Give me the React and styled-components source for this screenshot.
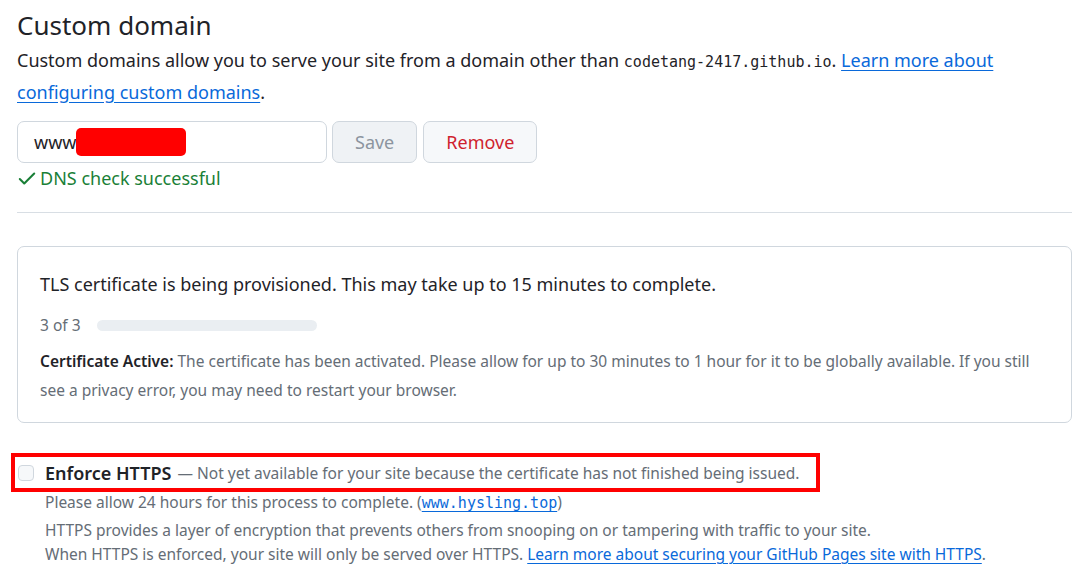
import React from 'react';
import styled, { createGlobalStyle } from 'styled-components';

const GlobalStyle = createGlobalStyle`
  body {
    margin: 0;
    background: #ffffff;
    color: #1f2328;
    font-family: "Noto Sans", "Open Sans", sans-serif;
  }
`;

const CHECK = 'M13.78 4.22a.75.75 0 0 1 0 1.06l-7.25 7.25a.75.75 0 0 1-1.06 0L2.22 9.28a.751.751 0 0 1 .018-1.042.751.751 0 0 1 1.042-.018L6 10.94l6.72-6.72a.75.75 0 0 1 1.06 0Z';

const CheckIcon = () => (
  <CheckSvg width="22" height="22" viewBox="0 0 16 16" fill="#1a7f37">
    <path d={CHECK} />
  </CheckSvg>
);

export default function App() {
  return (
    <Page>
      <GlobalStyle />
      <Title>Custom domain</Title>
      <Lead>
        Custom domains allow you to serve your site from a domain other than <Code>codetang-2417.github.io</Code>.{' '}
        <Link href="#">Learn more about configuring custom domains</Link>.
      </Lead>

      <FormRow>
        <Input>
          www<Redacted />
        </Input>
        <Button disabled>Save</Button>
        <Button danger>Remove</Button>
      </FormRow>
      <Success>
        <CheckIcon />
        DNS check successful
      </Success>

      <Divider />

      <Box>
        <BoxTitle>TLS certificate is being provisioned. This may take up to 15 minutes to complete.</BoxTitle>
        <StepRow>
          3 of 3
          <Progress />
        </StepRow>
        <BoxNote>
          <strong>Certificate Active:</strong> The certificate has been activated. Please allow for up to 30 minutes to 1 hour for it to be globally available. If you still see a privacy error, you may need to restart your browser.
        </BoxNote>
      </Box>

      <Highlight>
        <Checkbox type="checkbox" disabled />
        <CheckLabel>Enforce HTTPS</CheckLabel>
        <Muted>— Not yet available for your site because the certificate has not finished being issued.</Muted>
      </Highlight>
      <Note>
        Please allow 24 hours for this process to complete. (<CodeLink href="#">www.hysling.top</CodeLink>)
      </Note>
      <Help>
        HTTPS provides a layer of encryption that prevents others from snooping on or tampering with traffic to your site.
        <br />
        When HTTPS is enforced, your site will only be served over HTTPS.{' '}
        <Link href="#">Learn more about securing your GitHub Pages site with HTTPS</Link>.
      </Help>
    </Page>
  );
}

const Page = styled.div`
  padding: 6px 3px 0 17px;
  width: 1055px;
`;

const Title = styled.h2`
  margin: 0;
  font-size: 26px;
  font-weight: 400;
  line-height: 38px;
`;

const Lead = styled.p`
  margin: 0;
  font-size: 18px;
  line-height: 32px;
`;

const Code = styled.code`
  font-family: "DejaVu Sans Mono", "Liberation Mono", monospace;
  font-size: 15px;
  line-height: 1;
`;

const Link = styled.a`
  color: #0969da;
  text-decoration: underline;
  text-underline-offset: 3px;
`;

const CodeLink = styled(Link)`
  font-family: "DejaVu Sans Mono", "Liberation Mono", monospace;
  font-size: 15px;
  line-height: 1;
`;

const FormRow = styled.div`
  display: flex;
  gap: 5px;
  margin-top: 13px;
  height: 42px;
`;

const Input = styled.div`
  box-sizing: border-box;
  width: 310px;
  display: flex;
  align-items: center;
  padding: 0 16px;
  border: 1px solid #d0d7de;
  border-radius: 7px;
  font-size: 18px;
  color: #1f2328;
`;

const Redacted = styled.span`
  display: inline-block;
  width: 110px;
  height: 28px;
  background: #ff0000;
  border-radius: 5px;
`;

const Button = styled.button`
  box-sizing: border-box;
  height: 42px;
  padding: 0 22px;
  border: 1px solid #d0d7de;
  border-radius: 7px;
  font-family: inherit;
  font-size: 18px;
  background: ${p => (p.disabled ? '#eff2f5' : '#f6f8fa')};
  color: ${p => (p.danger ? '#cf222e' : p.disabled ? '#8c959f' : '#1f2328')};
  & + & {
    margin-left: 1px;
  }
`;

const Success = styled.div`
  display: flex;
  align-items: center;
  margin-top: 3px;
  font-size: 18px;
  line-height: 24px;
  color: #1a7f37;
`;

const CheckSvg = styled.svg`
  margin: 0 2px 0 -1px;
`;

const Divider = styled.hr`
  margin: 22px 0 33px;
  border: 0;
  border-top: 1px solid #d8dee4;
`;

const Box = styled.div`
  box-sizing: border-box;
  height: 177px;
  padding: 21px 22px 0;
  border: 1px solid #d0d7de;
  border-radius: 7px;
`;

const BoxTitle = styled.div`
  font-size: 18px;
  line-height: 32px;
`;

const StepRow = styled.div`
  display: flex;
  align-items: center;
  gap: 16px;
  margin-top: 13px;
  font-size: 15.5px;
  line-height: 24px;
  color: #656d76;
`;

const Progress = styled.div`
  width: 220px;
  height: 11px;
  border-radius: 6px;
  background: #eaeef2;
`;

const BoxNote = styled.p`
  margin: 10px 0 0;
  font-size: 15.5px;
  line-height: 29px;
  color: #656d76;
  strong {
    color: #1f2328;
    font-weight: 600;
  }
`;

const Highlight = styled.div`
  display: flex;
  align-items: center;
  box-sizing: border-box;
  width: 809px;
  height: 39px;
  margin: 30px 0 0 -6px;
  border: 4px solid #ff0000;
`;

const Checkbox = styled.input`
  appearance: none;
  box-sizing: border-box;
  width: 16px;
  height: 16px;
  margin: 0 11px 0 3px;
  border: 1px solid #d0d7de;
  border-radius: 4px;
  background: #f6f8fa;
`;

const CheckLabel = styled.span`
  font-size: 18px;
  font-weight: 600;
  color: #1f2328;
  margin-right: 6px;
`;

const Muted = styled.span`
  font-size: 15.5px;
  color: #656d76;
`;

const Note = styled.div`
  margin-left: 28px;
  font-size: 15.5px;
  line-height: 20px;
  color: #656d76;
`;

const Help = styled.p`
  margin: 6px 0 0 28px;
  font-size: 15.5px;
  line-height: 24px;
  color: #656d76;
`;
